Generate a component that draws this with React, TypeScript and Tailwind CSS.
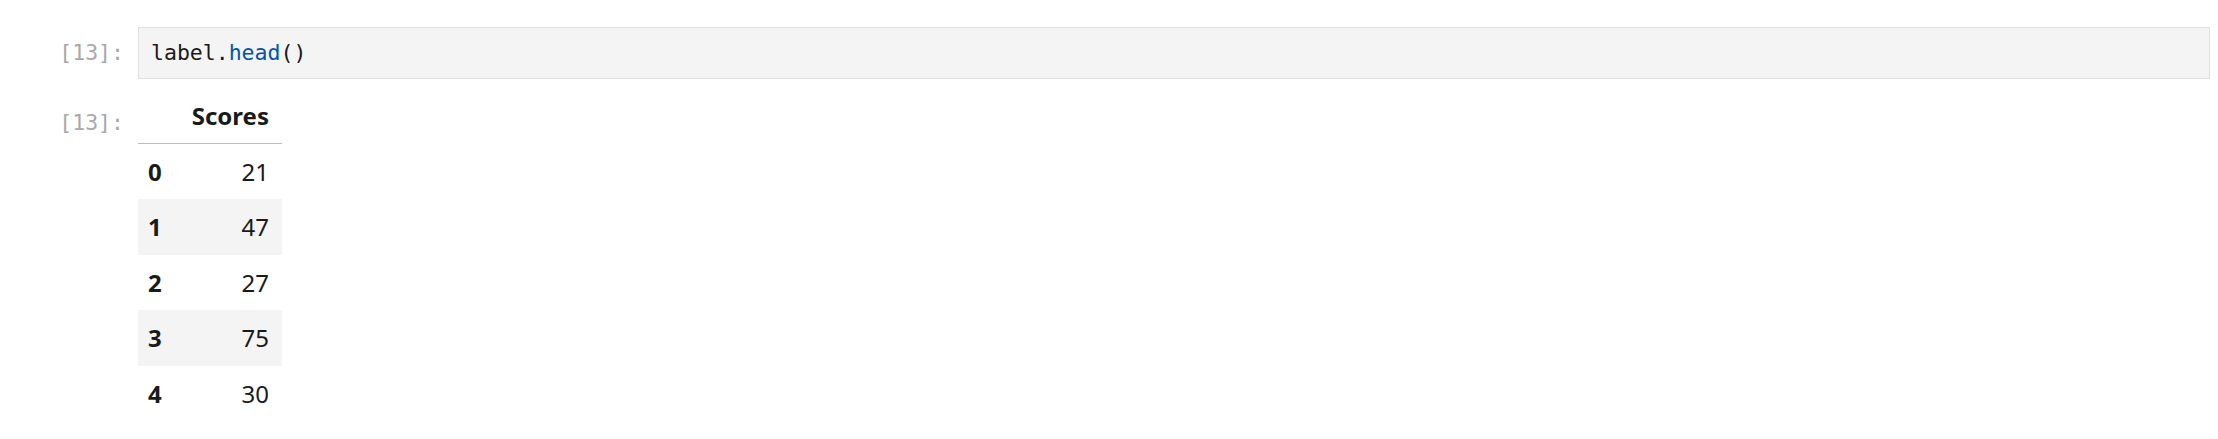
const rows = [
  { idx: '0', value: 21 },
  { idx: '1', value: 47 },
  { idx: '2', value: 27 },
  { idx: '3', value: 75 },
  { idx: '4', value: 30 },
];

const mono = "font-['DejaVu_Sans_Mono',monospace]";

function Prompt({ className = '' }: { className?: string }) {
  return (
    <div
      className={`w-[138px] shrink-0 pr-[14px] text-right text-[21.5px] leading-[26px] text-[#a8a8a8] ${mono} ${className}`}
    >
      [13]:
    </div>
  );
}

export default function App() {
  return (
    <div className="h-[439px] w-full bg-white pt-[27px]">
      {/* input cell */}
      <div className="flex items-center pr-[8px]">
        <Prompt />
        <div className="flex h-[52px] flex-1 items-center border border-[#e0e0e0] bg-[#f4f4f4] pl-[12px]">
          <span className={`text-[21.5px] leading-[26px] text-[#1a1a1a] ${mono}`}>
            label.<span className="text-[#0055aa]">head</span>()
          </span>
        </div>
      </div>

      {/* output cell */}
      <div className="mt-[9px] flex">
        <Prompt className="pt-[22px]" />
        <table className="border-collapse font-['Noto_Sans',sans-serif] text-[24px] text-[#1a1a1a]">
          <thead>
            <tr className="border-b border-[#bdbdbd]">
              <th className="w-[40px] px-[10px] py-[12px] leading-[31px]"></th>
              <th className="w-[104px] px-[13px] py-[12px] text-right font-bold leading-[31px]">
                Scores
              </th>
            </tr>
          </thead>
          <tbody>
            {rows.map((r, i) => (
              <tr key={r.idx} className={i % 2 === 1 ? 'bg-[#f4f4f4]' : 'bg-white'}>
                <th className="px-[10px] py-[12px] text-left font-bold leading-[31.4px]">
                  {r.idx}
                </th>
                <td className="px-[13px] py-[12px] text-right leading-[31.4px]">
                  {r.value}
                </td>
              </tr>
            ))}
          </tbody>
        </table>
      </div>
    </div>
  );
}
